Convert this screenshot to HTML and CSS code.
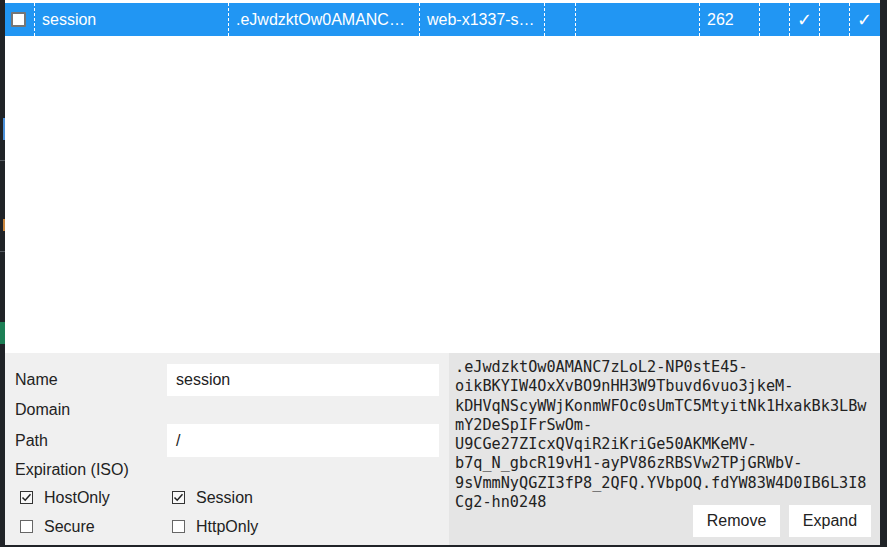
FILE: index.html
```html
<!DOCTYPE html>
<html>
<head>
<meta charset="utf-8">
<link rel="stylesheet" href="styles.css">
</head>
<body>
<div class="backdrop">
  <span class="bd-blue"></span>
  <span class="bd-line"></span>
  <span class="bd-orange"></span>
  <span class="bd-line"></span>
  <span class="bd-green"></span>
</div>
<div class="popup">
  <div class="row">
    <div class="cell c1"><span class="rowcheck"></span></div>
    <div class="cell c2">session</div>
    <div class="cell c3">.eJwdzktOw0AMANC7zLoL2-NP0stE45</div>
    <div class="cell c4">web-x1337-sessions</div>
    <div class="cell c5"></div>
    <div class="cell c6"></div>
    <div class="cell c7">262</div>
    <div class="cell c8"></div>
    <div class="cell c9 check">✓</div>
    <div class="cell c10"></div>
    <div class="cell c11 check">✓</div>
  </div>
  <div class="spacer"></div>
  <div class="details">
    <div class="form">
      <div class="frow r-name"><span class="label">Name</span><span class="input">session</span></div>
      <div class="frow r-domain"><span class="label">Domain</span></div>
      <div class="frow r-path"><span class="label">Path</span><span class="input">/</span></div>
      <div class="frow r-exp"><span class="label">Expiration (ISO)</span></div>
      <div class="crow">
        <span class="opt"><span class="box"><svg viewBox="0 0 13 13" width="13" height="13"><path d="M2.5 6.5 L5.2 9.2 L10.5 3.3" fill="none" stroke="#222" stroke-width="1.5"/></svg></span>HostOnly</span>
        <span class="opt"><span class="box"><svg viewBox="0 0 13 13" width="13" height="13"><path d="M2.5 6.5 L5.2 9.2 L10.5 3.3" fill="none" stroke="#222" stroke-width="1.5"/></svg></span>Session</span>
      </div>
      <div class="crow">
        <span class="opt"><span class="box empty"></span>Secure</span>
        <span class="opt"><span class="box empty"></span>HttpOnly</span>
      </div>
    </div>
    <div class="valuebox">
      <div class="value">
        <span class="ln">.eJwdzktOw0AMANC7zLoL2-NP0stE45-</span>
        <span class="ln">oikBKYIW4OxXvBO9nHH3W9Tbuvd6vuo3jkeM-</span>
        <span class="ln">kDHVqNScyWWjKonmWFOc0sUmTC5MtyitNk1HxakBk3LBw</span>
        <span class="ln">mY2DeSpIFrSwOm-</span>
        <span class="ln">U9CGe27ZIcxQVqiR2iKriGe50AKMKeMV-</span>
        <span class="ln">b7q_N_gbcR19vH1-ayPV86zRBSVw2TPjGRWbV-</span>
        <span class="ln">9sVmmNyQGZI3fP8_2QFQ.YVbpOQ.fdYW83W4D0IB6L3I8</span>
        <span class="ln">Cg2-hn0248</span>
      </div>
      <div class="buttons">
        <span class="btn remove">Remove</span>
        <span class="btn expand">Expand</span>
      </div>
    </div>
  </div>
</div>
</body>
</html>
```
FILE: styles.css
```css
html, body {
  margin: 0;
  padding: 0;
}
body {
  background: #202327;
  width: 887px;
  height: 547px;
  display: flex;
  font-family: "Liberation Sans", Arial, sans-serif;
  font-size: 16px;
  color: #222;
  overflow: hidden;
}
.backdrop {
  width: 5px;
  flex: none;
  display: flex;
  flex-direction: column;
  padding-top: 118px;
}
.backdrop span { display: block; margin-left: 3px; width: 2px; }
.bd-blue { height: 22px; background: #4a8fd8; }
.bd-line { height: 1px; margin-top: 20px; background: #555a60; margin-left: 0 !important; width: 5px !important; }
.bd-orange { height: 12px; margin-top: 58px; background: #c8843c; }
.bd-green { height: 22px; margin-top: 70px; background: #1d7f55; width: 5px !important; margin-left: 0 !important; }

.popup {
  width: 875px;
  height: 545px;
  flex: none;
  background: #ffffff;
  display: flex;
  flex-direction: column;
}
.row {
  margin-top: 3px;
  height: 33px;
  background: #2196f3;
  display: flex;
  color: #ffffff;
}
.cell {
  box-sizing: border-box;
  height: 33px;
  line-height: 33px;
  padding: 0 7px;
  border-left: 1px dashed #ffffff;
  white-space: nowrap;
  overflow: hidden;
  text-overflow: ellipsis;
  flex: none;
}
.c1 { width: 29px; border-left: none; padding: 0; display: flex; align-items: center; justify-content: center; }
.c2 { width: 194px; }
.c3 { width: 191px; }
.c4 { width: 125px; }
.c5 { width: 31px; }
.c6 { width: 124px; }
.c7 { width: 60px; }
.c8 { width: 30px; }
.c9 { width: 30px; }
.c10 { width: 30px; }
.c11 { width: 31px; }
.check { font-family: "DejaVu Sans", sans-serif; font-size: 18px; padding-left: 7px; text-overflow: clip; }
.rowcheck {
  display: block;
  box-sizing: border-box;
  width: 15px;
  height: 15px;
  background: #ffffff;
  border: 2px solid #767676;
  border-radius: 1px;
  margin-left: -2px;
  margin-top: 0;
}
.spacer { flex: 1; }
.details {
  height: 192px;
  display: flex;
  flex: none;
}
.form {
  width: 444px;
  box-sizing: border-box;
  background: #f0f0f0;
  padding: 11px 10px 0 10px;
}
.frow {
  display: flex;
  align-items: center;
}
.label { width: 152px; flex: none; }
.input {
  flex: 1;
  background: #ffffff;
  height: 32px;
  line-height: 32px;
  padding-left: 9px;
}
.r-name { height: 32px; }
.r-domain { height: 28px; }
.r-path { height: 33px; }
.r-path .input { height: 33px; line-height: 33px; }
.r-exp { height: 26px; }
.crow {
  display: flex;
  height: 29px;
  align-items: center;
}
.opt {
  display: flex;
  align-items: center;
  width: 152px;
  flex: none;
  padding-left: 5px;
  box-sizing: border-box;
}
.box {
  width: 13px;
  height: 13px;
  box-sizing: border-box;
  border: 1px solid #333;
  background: #f8f8f8;
  margin-right: 11px;
  display: block;
  position: relative;
}
.box svg { display: block; margin: -1px 0 0 -1px; }
.box.empty { border: 1px solid #666; background: #ffffff; }
.valuebox {
  width: 431px;
  background: #e5e5e5;
  position: relative;
  box-sizing: border-box;
  padding: 5px 6px 0 6px;
}
.value {
  font-family: "DejaVu Sans Mono", "Liberation Mono", monospace;
  font-size: 15.2px;
  line-height: 19.3px;
  color: #222;
}
.ln { display: block; white-space: nowrap; }
.buttons {
  position: absolute;
  right: 9px;
  bottom: 8px;
  display: flex;
  gap: 9px;
}
.btn {
  background: #ffffff;
  height: 32px;
  line-height: 32px;
  text-align: center;
  color: #222;
}
.remove { width: 87px; }
.expand { width: 82px; }
```
